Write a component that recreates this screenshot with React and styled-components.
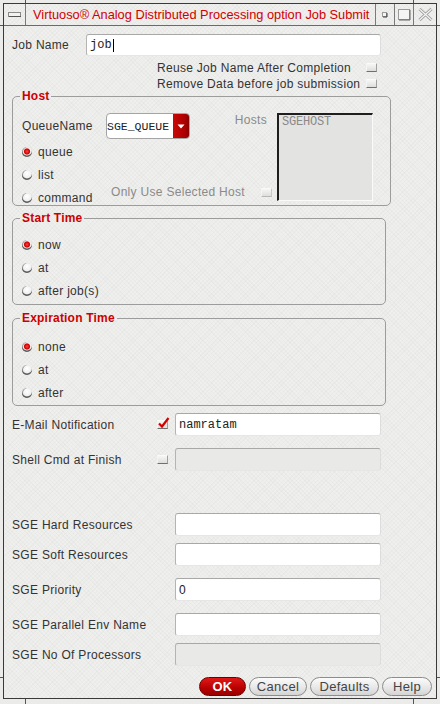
import React from "react";
import styled, { createGlobalStyle } from "styled-components";

const Global = createGlobalStyle`
  html, body { margin: 0; padding: 0; background: #ebebe9; }
  body { font-family: "Liberation Sans", Arial, sans-serif; font-size: 12px; letter-spacing: 0.3px; color: #333; }
  * { box-sizing: border-box; }
`;

const Frame = styled.div`
  position: relative;
  width: 440px;
  height: 704px;
  padding: 3px 3px 5px 3px;
  background: #ebebe9;
`;

const Mark = styled.div`
  position: absolute;
  background: #555;
  ${(p) => (p.$v ? `width:1px;height:${p.$len}px;` : `height:1px;width:${p.$len}px;`)}
  left: ${(p) => p.$x}px;
  top: ${(p) => p.$y}px;
`;

const Window = styled.div`
  height: 100%;
  border: 1px solid #3a3a3a;
  display: flex;
  flex-direction: column;
  background-color: #efefed;
  background-image: repeating-linear-gradient(45deg, rgba(0,0,0,0.018) 0 1px, transparent 1px 3px),
    repeating-linear-gradient(-45deg, rgba(0,0,0,0.018) 0 1px, transparent 1px 3px);
`;

const TitleBar = styled.div`
  height: 22px;
  flex: none;
  display: flex;
  border-bottom: 1px solid #6a6a6a;
`;

const TitleCell = styled.div`
  width: ${(p) => p.$w}px;
  flex: none;
  display: flex;
  align-items: center;
  justify-content: center;
  border-left: ${(p) => (p.$left ? "1px solid #7a7a7a" : "none")};
  border-right: ${(p) => (p.$right ? "1px solid #7a7a7a" : "none")};
`;

const TitleText = styled.div`
  flex: 1;
  min-width: 0;
  padding-left: 7px;
  display: flex;
  align-items: center;
  color: #d00000;
  font-size: 12.8px;
  letter-spacing: 0;
  white-space: nowrap;
  overflow: hidden;
`;

const Body = styled.div`
  flex: 1;
  display: flex;
  flex-direction: column;
  padding: 8px 0 2px 8px;
`;

const JobRow = styled.div`
  height: 22px;
  display: flex;
  align-items: center;
`;

const Label = styled.div`
  width: ${(p) => p.$w}px;
  flex: none;
  white-space: nowrap;
  color: ${(p) => (p.$dim ? "#8a8a8a" : "#333")};
`;

const Field = styled.div`
  width: ${(p) => p.$w}px;
  height: ${(p) => p.$h || 23}px;
  flex: none;
  display: flex;
  align-items: center;
  padding: 0 3px;
  border: 1px solid;
  border-color: #a8a8a8 #dcdcdc #e6e6e6 #b4b4b4;
  border-radius: 3px;
  background: ${(p) => (p.$off ? "#e9e9e7" : "#ffffff")};
  font-family: ${(p) => (p.$sans ? '"Liberation Sans", Arial, sans-serif' : '"Liberation Mono", "Courier New", monospace')};
  font-size: 12px;
  letter-spacing: 0;
  color: #222;
  white-space: nowrap;
`;

const Caret = styled.span`
  display: inline-block;
  width: 1px;
  height: 13px;
  background: #000;
  margin-left: 1px;
`;

const OptRow = styled.div`
  height: 13px;
  width: 366px;
  margin-top: ${(p) => p.$mt}px;
  padding-left: 145px;
  display: flex;
  align-items: center;
  white-space: nowrap;
`;

const Check = styled.span`
  position: relative;
  display: inline-block;
  flex: none;
  width: 11px;
  height: 9px;
  margin-left: ${(p) => (p.$push ? "auto" : `${p.$ml || 0}px`)};
  margin-right: ${(p) => p.$mr || 0}px;
  background: linear-gradient(#f6f6f4, #dedede);
  border-top: 1px solid #fafafa;
  border-left: 1px solid #f4f4f4;
  border-bottom: 1px solid ${(p) => (p.$dim ? "#b8b8b8" : "#707070")};
  border-right: 1px solid ${(p) => (p.$dim ? "#c8c8c8" : "#a0a0a0")};
  & svg { position: absolute; left: -1px; top: -5px; }
`;

const Group = styled.fieldset`
  margin: ${(p) => p.$mt}px 0 0 0;
  width: ${(p) => p.$w}px;
  min-width: 0;
  border: 1px solid #9c9c9c;
  border-radius: 5px;
  padding: ${(p) => p.$pad};
`;

const Legend = styled.legend`
  padding: 0 2px;
  margin-left: -2px;
  line-height: 12px;
  font-size: 12px;
  font-weight: bold;
  letter-spacing: 0.2px;
  color: #cc0000;
`;

const HostBody = styled.div`
  display: flex;
  align-items: flex-start;
`;

const HostLeft = styled.div`
  width: 255px;
  flex: none;
  display: flex;
  flex-direction: column;
`;

const QueueRow = styled.div`
  height: 26px;
  display: flex;
  align-items: center;
`;

const Combo = styled.div`
  width: 84px;
  height: 26px;
  display: flex;
  border: 1px solid #a4a4a4;
  border-radius: 4px;
  background: #fff;
  overflow: hidden;
`;

const ComboText = styled.div`
  flex: 1;
  display: flex;
  align-items: center;
  padding-left: 0;
  font-family: "Liberation Mono", "Courier New", monospace;
  font-size: 11.5px;
  letter-spacing: 0;
  color: #222;
  white-space: nowrap;
  overflow: hidden;
`;

const ComboBtn = styled.div`
  width: 16px;
  flex: none;
  display: flex;
  align-items: center;
  justify-content: center;
  background: linear-gradient(90deg, #c80808, #b00000 70%, #8a0000);
`;

const HostsLabel = styled.div`
  align-self: flex-start;
  margin-left: auto;
  margin-right: 10px;
  line-height: 14px;
  color: #8a8a8a;
`;

const HostLower = styled.div`
  display: flex;
  align-items: flex-end;
`;

const RadioCol = styled.div`
  display: flex;
  flex-direction: column;
  gap: 9px;
  margin-top: ${(p) => p.$mt || 0}px;
`;

const RadioRow = styled.div`
  height: 14px;
  display: flex;
  align-items: center;
  white-space: nowrap;
`;

const Radio = styled.span`
  width: 10px;
  height: 10px;
  flex: none;
  margin-right: 6px;
  border-radius: 50%;
  background: ${(p) =>
    p.$on
      ? "radial-gradient(circle at 50% 45%, #ff4040 0, #d00000 2.6px, #f6f6f6 3.6px, #e4e4e4 70%, #c8c8c8 100%)"
      : "radial-gradient(circle at 50% 35%, #ffffff 0, #f2f2f2 45%, #cfcfcf 100%)"};
  box-shadow: inset 0 -1.5px 0 #5c5c5c, inset 1px 0 0 #9a9a9a;
`;

const OnlySel = styled.div`
  height: 14px;
  margin-left: auto;
  margin-bottom: 6px;
  margin-right: 5px;
  display: flex;
  align-items: center;
  white-space: nowrap;
  color: #8a8a8a;
`;

const ListBox = styled.div`
  width: 96px;
  height: 88px;
  flex: none;
  border-top: 2px solid #1e1e1e;
  border-left: 2px solid #1e1e1e;
  border-right: 1px solid #fafafa;
  border-bottom: 1px solid #fafafa;
  background: #e3e3e1;
  padding: 1px 0 0 3px;
  font-family: "Liberation Mono", "Courier New", monospace;
  font-size: 12px;
  letter-spacing: -0.2px;
  line-height: 13px;
  color: #8a8a8a;
`;

const FormRow = styled.div`
  height: 23px;
  margin-top: ${(p) => p.$mt}px;
  display: flex;
  align-items: center;
`;

const CheckSlot = styled.div`
  width: 18px;
  flex: none;
  display: flex;
  align-items: center;
`;

const ButtonRow = styled.div`
  margin-top: 11px;
  height: 19px;
  display: flex;
  justify-content: flex-end;
  gap: 3px;
  padding-right: 4px;
`;

const Btn = styled.button`
  width: ${(p) => p.$w}px;
  height: 19px;
  padding: 0;
  border-radius: 10px;
  border: 1px solid ${(p) => (p.$primary ? "#6a0000" : "#8c8c8c")};
  background: ${(p) =>
    p.$primary ? "linear-gradient(#e01818, #b80000 60%, #9a0000)" : "linear-gradient(#fbfbfb, #e6e6e6 60%, #d4d4d4)"};
  color: ${(p) => (p.$primary ? "#ffffff" : "#444")};
  font-family: "Liberation Sans", Arial, sans-serif;
  font-size: 13px;
  letter-spacing: 0.3px;
  font-weight: ${(p) => (p.$primary ? "bold" : "normal")};
  line-height: 17px;
`;

const CheckMark = () => (
  <svg width="13" height="13" viewBox="0 0 13 13">
    <path d="M2 7.5 L5 10.5 L11.5 2" fill="none" stroke="#d40000" strokeWidth="2.2" />
  </svg>
);

const Opt = ({ on, children }) => (
  <RadioRow>
    <Radio $on={on} />
    {children}
  </RadioRow>
);

export default function App() {
  return (
    <>
      <Global />
      <Frame>
        <Mark $v $len={3} $x={25} $y={0} />
        <Mark $v $len={3} $x={413} $y={0} />
        <Mark $v $len={5} $x={25} $y={699} />
        <Mark $v $len={5} $x={413} $y={699} />
        <Mark $len={3} $x={0} $y={25} />
        <Mark $len={3} $x={437} $y={25} />
        <Mark $len={3} $x={0} $y={677} />
        <Mark $len={3} $x={437} $y={677} />
        <Window>
          <TitleBar>
            <TitleCell $w={22} $right>
              <svg width="14" height="7" viewBox="0 0 14 7">
                <rect x="0.5" y="1.5" width="12" height="4" fill="#f2f2f2" stroke="#8a8a8a" />
                <line x1="1" y1="5.5" x2="13" y2="5.5" stroke="#555" />
              </svg>
            </TitleCell>
            <TitleText>Virtuoso® Analog Distributed Processing option Job Submit</TitleText>
            <TitleCell $w={19} $left>
              <svg width="6" height="6" viewBox="0 0 6 6">
                <rect x="0.5" y="0.5" width="4" height="4" fill="#f4f4f4" stroke="#9a9a9a" />
                <path d="M5 1 V5 H1" fill="none" stroke="#444" />
              </svg>
            </TitleCell>
            <TitleCell $w={19} $left>
              <svg width="13" height="12" viewBox="0 0 13 12">
                <rect x="0.5" y="0.5" width="11" height="10" fill="#f4f4f4" stroke="#9a9a9a" />
                <path d="M12 1 V11 H1" fill="none" stroke="#666" />
              </svg>
            </TitleCell>
            <TitleCell $w={23} $left>
              <svg width="15" height="13" viewBox="0 0 15 13">
                <path d="M1.5 1 L13.5 12 M13.5 1 L1.5 12" stroke="#9a9a9a" strokeWidth="3" />
                <path d="M1.5 1 L13.5 12 M13.5 1 L1.5 12" stroke="#f4f4f4" strokeWidth="1.2" />
              </svg>
            </TitleCell>
          </TitleBar>

          <Body>
            <JobRow>
              <Label $w={74}>Job Name</Label>
              <Field $w={295} $h={22}>
                job<Caret />
              </Field>
            </JobRow>
            <OptRow $mt={5}>
              Reuse Job Name After Completion
              <Check $push $mr={1} />
            </OptRow>
            <OptRow $mt={3}>
              Remove Data before job submission
              <Check $push $mr={1} />
            </OptRow>

            <Group $mt={0} $w={379} $pad="11px 16px 0 9px">
              <Legend>Host</Legend>
              <HostBody>
                <HostLeft>
                  <QueueRow>
                    <Label $w={84}>QueueName</Label>
                    <Combo>
                      <ComboText>SGE_QUEUE</ComboText>
                      <ComboBtn>
                        <svg width="8" height="6" viewBox="0 0 8 6">
                          <path d="M0.5 1.5 H7.5 L4 5.5 Z" fill="#ffffff" />
                        </svg>
                      </ComboBtn>
                    </Combo>
                    <HostsLabel>Hosts</HostsLabel>
                  </QueueRow>
                  <HostLower>
                    <RadioCol $mt={6}>
                      <Opt on>queue</Opt>
                      <Opt>list</Opt>
                      <Opt>command</Opt>
                    </RadioCol>
                    <OnlySel>
                      Only Use Selected Host
                      <Check $ml={16} $dim />
                    </OnlySel>
                  </HostLower>
                </HostLeft>
                <ListBox>SGEHOST</ListBox>
              </HostBody>
            </Group>

            <Group $mt={6} $w={374} $pad="14px 0 6px 9px">
              <Legend>Start Time</Legend>
              <RadioCol>
                <Opt on>now</Opt>
                <Opt>at</Opt>
                <Opt>after job(s)</Opt>
              </RadioCol>
            </Group>

            <Group $mt={7} $w={374} $pad="16px 0 5px 9px">
              <Legend>Expiration Time</Legend>
              <RadioCol>
                <Opt on>none</Opt>
                <Opt>at</Opt>
                <Opt>after</Opt>
              </RadioCol>
            </Group>

            <FormRow $mt={7}>
              <Label $w={145}>E-Mail Notification</Label>
              <CheckSlot>
                <Check>
                  <CheckMark />
                </Check>
              </CheckSlot>
              <Field $w={206}>namratam</Field>
            </FormRow>
            <FormRow $mt={12}>
              <Label $w={145}>Shell Cmd at Finish</Label>
              <CheckSlot>
                <Check />
              </CheckSlot>
              <Field $w={206} $off />
            </FormRow>

            <FormRow $mt={42}>
              <Label $w={163}>SGE Hard Resources</Label>
              <Field $w={206} />
            </FormRow>
            <FormRow $mt={7}>
              <Label $w={163}>SGE Soft Resources</Label>
              <Field $w={206} />
            </FormRow>
            <FormRow $mt={12}>
              <Label $w={163}>SGE Priority</Label>
              <Field $w={206} $sans>0</Field>
            </FormRow>
            <FormRow $mt={12}>
              <Label $w={163}>SGE Parallel Env Name</Label>
              <Field $w={206} />
            </FormRow>
            <FormRow $mt={7}>
              <Label $w={163}>SGE No Of Processors</Label>
              <Field $w={206} $off />
            </FormRow>

            <ButtonRow>
              <Btn $w={47} $primary>OK</Btn>
              <Btn $w={58}>Cancel</Btn>
              <Btn $w={69}>Defaults</Btn>
              <Btn $w={50}>Help</Btn>
            </ButtonRow>
          </Body>
        </Window>
      </Frame>
    </>
  );
}
